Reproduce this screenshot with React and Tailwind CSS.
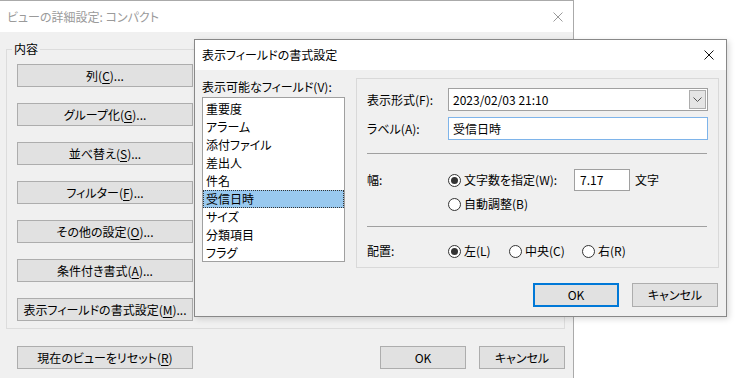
import React from "react";

const font = { fontFamily: '"Noto Sans CJK JP", "Noto Sans", sans-serif' };

function U({ children }) {
  return <span className="underline underline-offset-2">{children}</span>;
}

function Btn({ children, className = "", primary = false }) {
  return (
    <div
      className={
        "flex items-center justify-center bg-[#e1e1e1] text-[12px] text-black leading-none " +
        (primary ? "border-2 border-[#0078d7] " : "border border-[#adadad] ") +
        className
      }
    >
      {children}
    </div>
  );
}

function CloseX({ color, size = 10 }) {
  return (
    <svg width={size} height={size} viewBox="0 0 10 10">
      <path d="M0.5 0.5 L9.5 9.5 M9.5 0.5 L0.5 9.5" stroke={color} strokeWidth="1" />
    </svg>
  );
}

function Radio({ checked }) {
  return (
    <div className="w-[13px] h-[13px] rounded-full border border-[#333] bg-white flex items-center justify-center shrink-0">
      {checked && <div className="w-[7px] h-[7px] rounded-full bg-[#333]" />}
    </div>
  );
}

function Chevron() {
  return (
    <svg width="9" height="6" viewBox="0 0 9 6">
      <path d="M0.5 0.5 L4.5 4.5 L8.5 0.5" stroke="#555" strokeWidth="1" fill="none" />
    </svg>
  );
}

const backButtons = [
  ["列(", "C", ")..."],
  ["グループ化(", "G", ")..."],
  ["並べ替え(", "S", ")..."],
  ["フィルター(", "F", ")..."],
  ["その他の設定(", "O", ")..."],
  ["条件付き書式(", "A", ")..."],
  ["表示フィールドの書式設定(", "M", ")..."],
];

const fields = ["重要度", "アラーム", "添付ファイル", "差出人", "件名", "受信日時", "サイズ", "分類項目", "フラグ"];

export default function App() {
  return (
    <div
      className="relative w-[736px] h-[378px] bg-white overflow-hidden text-[12px] text-black [font-feature-settings:'palt']"
      style={font}
    >
      {/* Back window */}
      <div className="absolute left-0 top-0 w-[574px] h-[390px] border-t border-r border-[#aaaaaa] bg-[#f0f0f0] flex flex-col">
        <div className="h-[31px] bg-white flex items-center justify-between pl-[7px] pr-[10px] shrink-0">
          <span className="text-[#9a9a9a]">ビューの詳細設定: コンパクト</span>
          <CloseX color="#9a9a9a" />
        </div>
        <div className="relative ml-[6px] mt-[17px] w-[559px] h-[280px] border border-[#dcdcdc] pt-[14px] pl-[10px] flex flex-col gap-[16px]">
          <span className="absolute left-[5px] top-[-9px] px-[2px] bg-[#f0f0f0] leading-[16px]">内容</span>
          {backButtons.map(([a, b, c], i) => (
            <Btn key={i} className="w-[176px] h-[23px]">
              {a}
              <U>{b}</U>
              {c}
            </Btn>
          ))}
        </div>
        <div className="flex mt-[17px] pl-[17px]">
          <Btn className="w-[176px] h-[23px]">
            現在のビューをリセット(<U>R</U>)
          </Btn>
          <Btn className="w-[86px] h-[23px] ml-[187px]">OK</Btn>
          <Btn className="w-[86px] h-[23px] ml-[13px]">キャンセル</Btn>
        </div>
      </div>

      {/* Front dialog */}
      <div className="absolute left-[194px] top-[39px] w-[533px] h-[278px] border border-[#888888] bg-[#f0f0f0] flex flex-col shadow-[2px_2px_6px_rgba(0,0,0,0.15)]">
        <div className="h-[30px] bg-white flex items-center justify-between pl-[7px] pr-[12px] shrink-0">
          <span>表示フィールドの書式設定</span>
          <CloseX color="#111" />
        </div>
        <div className="flex pl-[7px]">
          <div className="flex flex-col w-[143px] pt-[9px]">
            <span className="leading-[16px]">表示可能なフィールド(V):</span>
            <div className="mt-[2px] h-[165px] bg-white border border-[#a0a0a0] pt-[2px] flex flex-col">
              {fields.map((f, i) =>
                f === "受信日時" ? (
                  <div
                    key={i}
                    className="h-[18px] leading-[16px] pl-[2px] bg-[#99c9ef] border border-dotted border-[#333]"
                  >
                    {f}
                  </div>
                ) : (
                  <div key={i} className="h-[18px] leading-[18px] pl-[3px]">
                    {f}
                  </div>
                )
              )}
            </div>
          </div>
          <div className="flex flex-col ml-[11px] pt-[8px]">
            <div className="w-[363px] h-[190px] border border-[#d9d9d9] pl-[10px] pr-[10px] pt-[9px] flex flex-col">
              <div className="flex items-center h-[23px]">
                <span className="w-[81px]">表示形式(F):</span>
                <div className="w-[260px] h-[23px] bg-white border border-[#a0a0a0] flex items-center justify-between pl-[4px] pr-[1px]">
                  <span>2023/02/03 21:10</span>
                  <div className="w-[17px] h-[19px] bg-[#e5e5e5] border border-[#acacac] flex items-center justify-center">
                    <Chevron />
                  </div>
                </div>
              </div>
              <div className="flex items-center h-[23px] mt-[6px]">
                <span className="w-[81px]">ラベル(A):</span>
                <div className="w-[260px] h-[23px] bg-white border border-[#7eb4ea] flex items-center pl-[4px]">
                  <span>受信日時</span>
                </div>
              </div>
              <div className="mt-[13px] w-[340px] border-t border-[#a0a0a0]" />
              <div className="flex items-center h-[22px] mt-[15px]">
                <span className="w-[81px]">幅:</span>
                <Radio checked />
                <span className="ml-[3px] w-[110px]">文字数を指定(W):</span>
                <div className="w-[56px] h-[22px] bg-white border border-[#a0a0a0] flex items-center pl-[5px]">
                  7.17
                </div>
                <span className="ml-[5px]">文字</span>
              </div>
              <div className="flex items-center h-[20px] mt-[3px]">
                <span className="w-[81px]" />
                <Radio />
                <span className="ml-[3px]">自動調整(B)</span>
              </div>
              <div className="mt-[12px] w-[340px] border-t border-[#a0a0a0]" />
              <div className="flex items-center h-[20px] mt-[14px]">
                <span className="w-[81px]">配置:</span>
                <div className="flex items-center w-[61px]">
                  <Radio checked />
                  <span className="ml-[3px]">左(L)</span>
                </div>
                <div className="flex items-center w-[73px]">
                  <Radio />
                  <span className="ml-[3px]">中央(C)</span>
                </div>
                <div className="flex items-center">
                  <Radio />
                  <span className="ml-[3px]">右(R)</span>
                </div>
              </div>
            </div>
            <div className="flex justify-end mt-[15px] gap-[13px] pr-[1px]">
              <Btn primary className="w-[86px] h-[24px]">OK</Btn>
              <Btn className="w-[86px] h-[24px]">キャンセル</Btn>
            </div>
          </div>
        </div>
      </div>
    </div>
  );
}
